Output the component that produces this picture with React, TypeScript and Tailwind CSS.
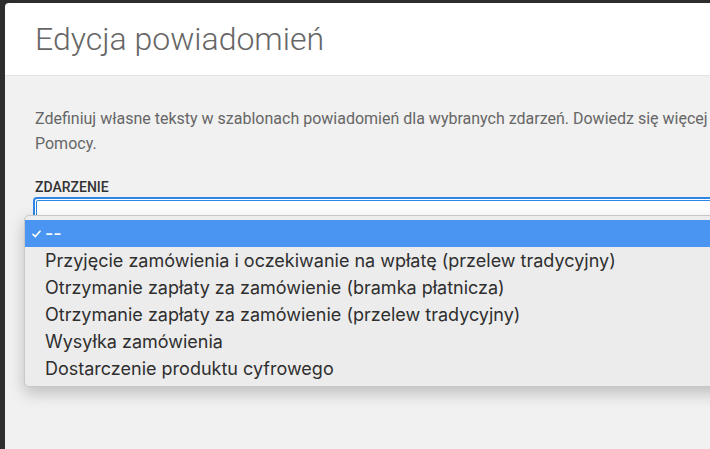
const options = [
  "Przyjęcie zamówienia i oczekiwanie na wpłatę (przelew tradycyjny)",
  "Otrzymanie zapłaty za zamówienie (bramka płatnicza)",
  "Otrzymanie zapłaty za zamówienie (przelew tradycyjny)",
  "Wysyłka zamówienia",
  "Dostarczenie produktu cyfrowego",
];

function EventDropdown() {
  return (
    <div className="absolute left-[24px] top-[215px] w-[720px] rounded-[5px] border border-[#c8c8c8] bg-[#ececec] pt-[4px] pb-[4px] shadow-[0_6px_16px_rgba(0,0,0,0.22)] [font-family:Inter,'Liberation_Sans',sans-serif]">
      <div className="flex h-[27px] items-center bg-[#4a94f2] text-[18px] text-white">
        <span className="flex w-[20px] justify-center pl-[3px]">
          <svg width="9" height="8" viewBox="0 0 9 8" fill="none">
            <path d="M1 4.3 3.4 6.6 8 1.2" stroke="white" strokeWidth="1.6" strokeLinecap="round" strokeLinejoin="round" />
          </svg>
        </span>
        <span className="font-medium">--</span>
      </div>
      {options.map((option) => (
        <div key={option} className="flex h-[27px] items-center pl-[20px] text-[18px] text-[#2f2f2f]">
          {option}
        </div>
      ))}
    </div>
  );
}

export default function App() {
  return (
    <div className="relative flex h-[449px] w-full overflow-hidden bg-[#2e2e2e] [font-family:Roboto,'Liberation_Sans',sans-serif]">
      <div className="w-[5px] shrink-0" />
      <div className="mt-[3px] flex flex-1 flex-col overflow-hidden rounded-tl-[4px] bg-white">
        <header className="flex h-[73px] shrink-0 items-center border-b border-[#e3e3e3] pl-[30px]">
          <h1 className="text-[32px] font-light leading-none text-[#666]">Edycja powiadomień</h1>
        </header>
        <div className="flex-1 bg-[#f1f1f1] pl-[30px] pt-[30px]">
          <p className="w-[700px] text-[16px] leading-[25px] text-[#666]">
            Zdefiniuj własne teksty w szablonach powiadomień dla wybranych zdarzeń. Dowiedz się więcej w
            Pomocy.
          </p>
          <label className="mt-[24px] block text-[14px] font-medium leading-none text-[#333]">ZDARZENIE</label>
          <div className="-ml-[2px] mt-[3px] h-[36px] w-[700px] rounded-[4px] border-2 border-[#2f86e4] bg-white p-[1px]">
            <div className="h-full w-full rounded-[2px] border border-[#2f86e4]" />
          </div>
        </div>
      </div>
      <EventDropdown />
    </div>
  );
}
